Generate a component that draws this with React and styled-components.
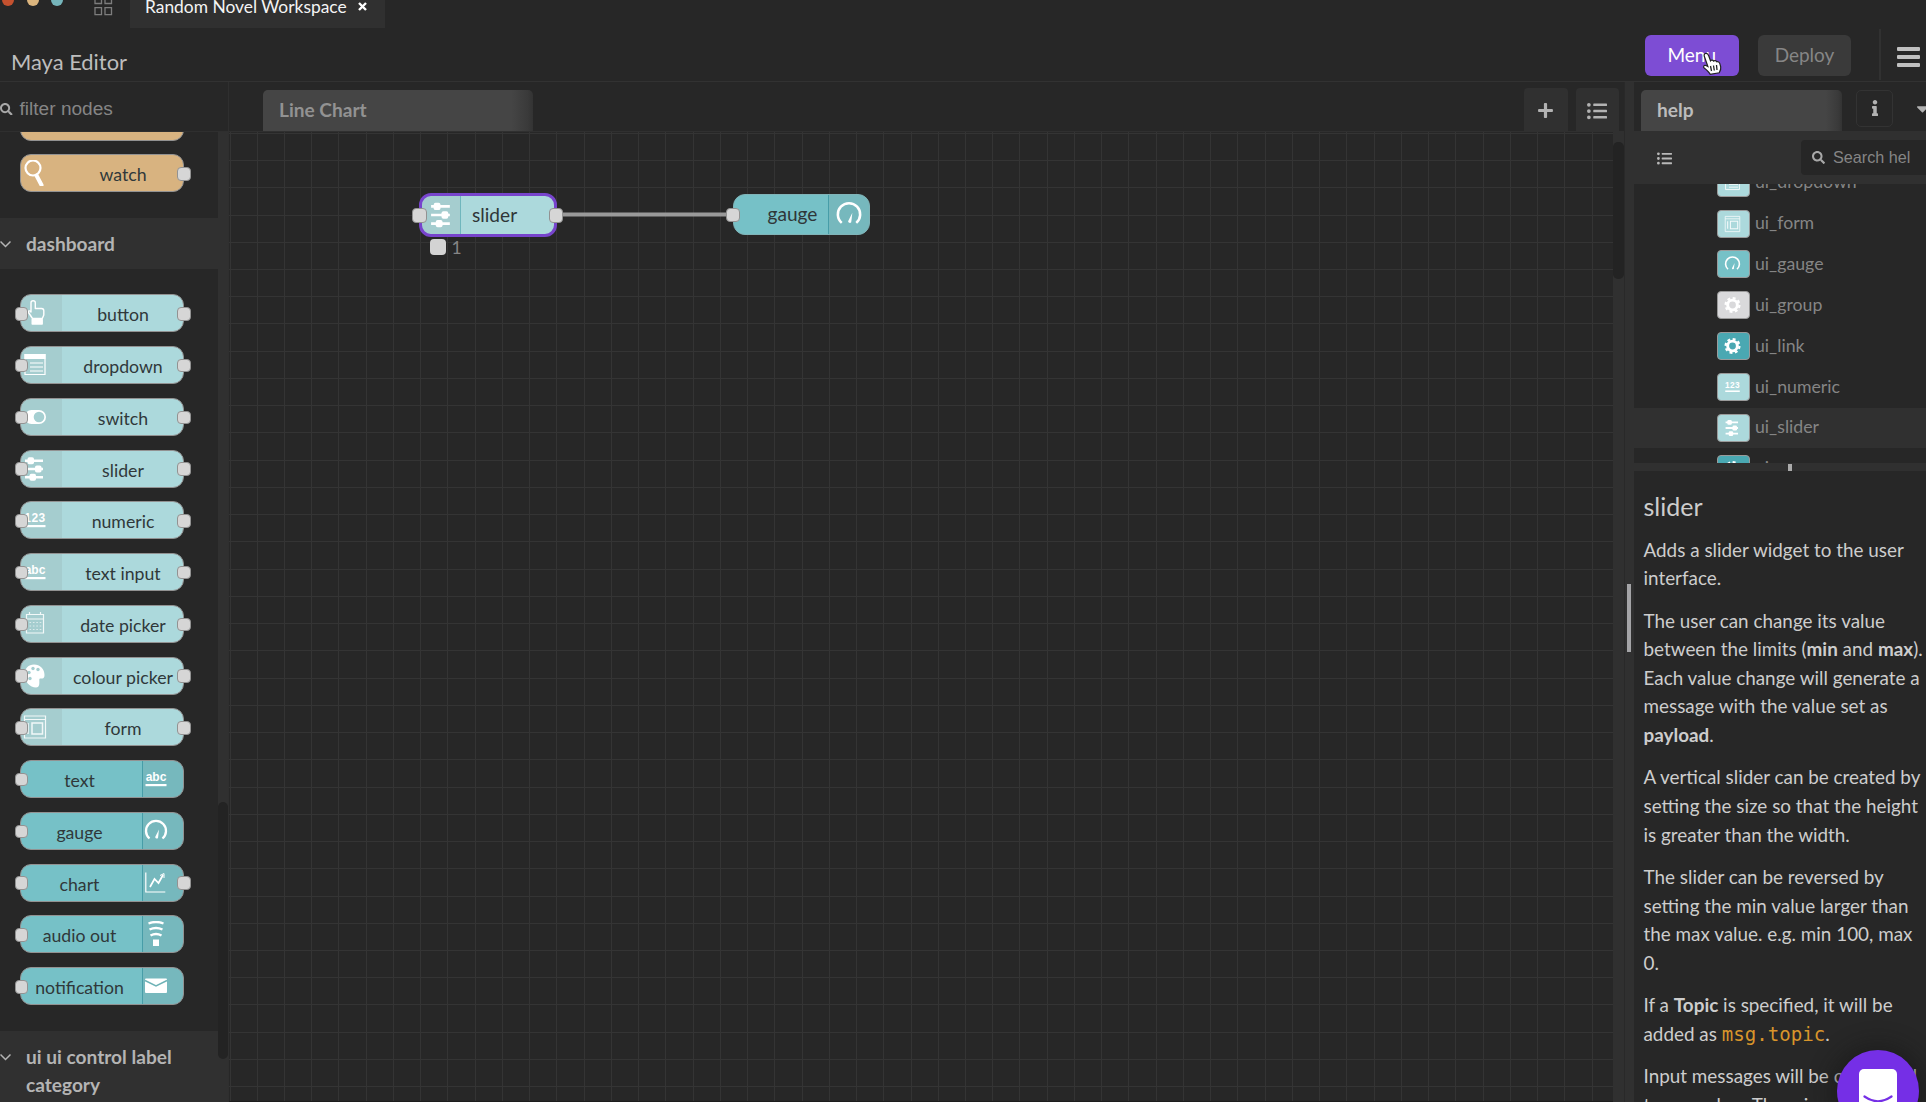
import React from "react";
import styled, { createGlobalStyle, css } from "styled-components";
import { FaSearch, FaListUl, FaPlus, FaInfo, FaCaretDown } from "react-icons/fa";

const Global = createGlobalStyle`
  * { box-sizing: border-box; }
  html, body { margin: 0; padding: 0; background: #272727; overflow: hidden; }
`;

const lato = `Lato, "Noto Sans", sans-serif`;
const arial = `"Liberation Sans", Arial, sans-serif`;

const Page = styled.div`
  width: 1926px;
  height: 1102px;
  overflow: hidden;
  display: flex;
  flex-direction: column;
  background: #272727;
  font-family: ${lato};
  color: #cfcfcf;
  position: relative;
`;

const TitleBar = styled.div`
  height: 28px;
  display: flex;
  align-items: flex-start;
  flex: none;
`;
const Lights = styled.div`
  display: flex;
  gap: 12.5px;
  padding-left: 2px;
  margin-top: -6px;
  width: 94px;
`;
const Light = styled.span`
  width: 12px;
  height: 12px;
  border-radius: 50%;
  background: ${(p) => p.$c};
`;
const WorkspaceTab = styled.div`
  margin-left: 17px;
  width: 255px;
  height: 28px;
  background: #303030;
  display: flex;
  padding-left: 15px;
  gap: 11px;
  color: #f4f4f4;
  font-size: 17.4px;
  line-height: 22px;
  white-space: nowrap;
  & > span { margin-top: -4px; }
  & > svg { margin-top: 2px; }
`;

const Header = styled.header`
  height: 54px;
  flex: none;
  display: flex;
  align-items: flex-start;
  border-bottom: 1px solid #323232;
`;
const AppTitle = styled.h1`
  margin: 20px 0 0 11px;
  font-weight: 400;
  font-size: 21.9px;
  line-height: 28px;
  color: #bdbdbd;
  flex: 1;
`;
const HeaderButton = styled.button`
  border: 0;
  padding: 0 0 3px;
  margin: 7px 19px 0 0;
  width: ${(p) => p.$w}px;
  height: 41px;
  border-radius: 6px;
  font: 400 19px ${lato};
  background: ${(p) => (p.$primary ? "#7d4dd4" : "#3a3a3a")};
  color: ${(p) => (p.$primary ? "#fff" : "#868686")};
`;
const Burger = styled.div`
  margin: 1px 0 0 9px;
  width: 47px;
  height: 51px;
  border-left: 2px solid #313131;
  padding: 18px 0 0 16px;
  display: flex;
  flex-direction: column;
  gap: 4px;
  & > i { width: 23px; height: 4px; border-radius: 1px; background: #c0c0c0; }
`;

const Body = styled.div`
  flex: 1;
  min-height: 0;
  display: flex;
`;

/* palette */
const Palette = styled.aside`
  width: 229px;
  display: flex;
  flex-direction: column;
  border-right: 1px solid #2f2f2f;
`;
const PaletteSearch = styled.div`
  height: 50px;
  flex: none;
  display: flex;
  align-items: center;
  padding-top: 5px;
  gap: 7px;
  font: 19.1px ${arial};
  color: #858585;
  border-bottom: 1px solid #2f2f2f;
  & > svg { color: #a8a8a8; }
`;
const PaletteBody = styled.div`
  flex: 1;
  min-height: 0;
  display: flex;
`;
const PaletteList = styled.div`
  width: 218px;
  overflow: hidden;
`;
const Track = styled.div`
  width: ${(p) => p.$w}px;
  flex: none;
  background: #303030;
  padding-top: ${(p) => p.$top}px;
`;
const Thumb = styled.div`
  height: ${(p) => p.$h}px;
  border-radius: 5px;
  background: #232323;
`;
const Group = styled.div`
  padding: ${(p) => p.$pad};
  margin-top: ${(p) => p.$lift || 0}px;
  display: flex;
  flex-direction: column;
  gap: 13.77px;
`;
const CategoryHeader = styled.div`
  width: 229px;
  height: ${(p) => p.$h}px;
  background: #303030;
  display: flex;
  gap: 15px;
  padding-top: ${(p) => p.$top}px;
  font-weight: 700;
  font-size: 19.1px;
  line-height: 27.3px;
  color: #b4b4b4;
  & > svg { flex: none; margin-top: 10px; }
  & > span { width: 170px; }
`;
const NodeBox = styled.div`
  position: relative;
  flex: none;
  width: 164px;
  height: 38px;
  border: 1.4px solid #929292;
  border-radius: 11px;
  background: ${(p) => p.$bg};
  display: flex;
  flex-direction: ${(p) => (p.$right ? "row-reverse" : "row")};
`;
const NodeIcon = styled.div`
  width: 41px;
  flex: none;
  display: flex;
  align-items: center;
  padding-left: ${(p) => (p.$right ? 1 : 2)}px;
  background: ${(p) => (p.$plain ? "transparent" : "rgba(120,120,120,0.13)")};
  ${(p) =>
    p.$right
      ? css`border-left: 1px solid rgba(40,140,155,0.6); border-radius: 0 10px 10px 0;`
      : css`border-radius: 10px 0 0 10px;`}
`;
const NodeLabel = styled.div`
  flex: 1;
  font-size: 17.7px;
  line-height: 40px;
  color: #30383a;
  white-space: nowrap;
  display: flex;
  justify-content: center;
  ${(p) => (p.$right ? "padding-right: 4px;" : "padding-left: 1px;")}
`;
const Port = styled.i`
  position: absolute;
  ${(p) => (p.$side === "l" ? "left" : "right")}: ${(p) => p.$o || -7.5}px;
  top: 50%;
  margin-top: ${(p) => -(p.$s || 13.6) / 2 + 0.5}px;
  width: ${(p) => p.$s || 13.6}px;
  height: ${(p) => p.$s || 13.6}px;
  border-radius: 4px;
  border: 1.4px solid #929292;
  background: #d6d6d6;
`;

/* workspace */
const Workspace = styled.main`
  width: 1395px;
  display: flex;
  flex-direction: column;
`;
const TabBar = styled.div`
  height: 50px;
  flex: none;
  display: flex;
  align-items: flex-end;
  border-bottom: 1px solid #303030;
  padding: 0 5px 0 34px;
  gap: 8px;
`;
const FlowTab = styled.div`
  width: ${(p) => p.$w}px;
  flex: none;
  height: 41px;
  border-radius: 5px 5px 0 0;
  background: linear-gradient(90deg, #454545 92%, #3a3a3a 98%, #333);
  color: ${(p) => p.$c};
  font-weight: 700;
  font-size: 19.1px;
  line-height: 40px;
  padding-left: 16px;
`;
const Spacer = styled.div`flex: 1;`;
const TabButton = styled.div`
  width: 43.5px;
  height: 43px;
  border-radius: 4px 4px 0 0;
  background: #303030;
  display: flex;
  align-items: center;
  justify-content: center;
  padding-top: 2px;
  color: #b2b2b2;
`;
const CanvasRow = styled.div`
  flex: 1;
  min-height: 0;
  display: flex;
`;
const Canvas = styled.div`
  flex: 1;
  position: relative;
  overflow: hidden;
  border-bottom: 1px solid #1d1d1d;
`;
const Grid = styled.svg`
  display: block;
`;
const CanvasNode = styled(NodeBox)`
  position: absolute;
  left: ${(p) => p.$x}px;
  top: ${(p) => p.$y}px;
  width: ${(p) => p.$w}px;
  height: ${(p) => p.$h}px;
  border: ${(p) => (p.$sel ? "3px solid #7744cc" : "1.4px solid #80b4b8")};
  border-radius: 12px;
`;
const CanvasIcon = styled(NodeIcon)`
  width: ${(p) => (p.$right ? 41 : 39)}px;
  justify-content: center;
  padding: 0;
  ${(p) => !p.$right && css`border-right: 1px solid #6fb6bd;`}
`;
const CanvasLabel = styled.div`
  flex: 1;
  font-size: 19.1px;
  line-height: 38px;
  color: #2f3638;
  padding-left: ${(p) => p.$l}px;
`;
const Status = styled.div`
  position: absolute;
  left: 200.5px;
  top: 106.5px;
  display: flex;
  gap: 5.5px;
  font-size: 17.5px;
  line-height: 17px;
  color: #858585;
  & > i { width: 16.5px; height: 16.5px; border-radius: 4px; background: #d3d3d3; }
`;
const Separator = styled.div`
  width: 10px;
  flex: none;
  background: #303030;
  border-left: 1px solid #292929;
  display: flex;
  align-items: center;
  justify-content: flex-end;
  padding: 51px 3px 0 0;
  & > i { width: 4px; height: 68px; background: #a4a4a7; }
`;

/* sidebar */
const Sidebar = styled.aside`
  width: 292px;
  display: flex;
  flex-direction: column;
  overflow: hidden;
`;
const SideTabs = styled.div`
  height: 49px;
  flex: none;
  display: flex;
  align-items: flex-end;
  padding-left: 7px;
`;
const InfoTab = styled.div`
  margin: 0 0 4px 14px;
  width: 37px;
  height: 37px;
  flex: none;
  border: 1px solid #333;
  border-radius: 5px;
  display: flex;
  align-items: center;
  justify-content: center;
  color: #b2b2b2;
  padding-bottom: 1px;
`;
const Caret = styled.div`
  margin: 0 0 10px 20px;
  color: #b2b2b2;
  height: 22px;
  flex: none;
`;
const SideToolbar = styled.div`
  height: 53px;
  flex: none;
  background: #303030;
  display: flex;
  align-items: center;
  padding-left: 22.5px;
  color: #b8b8b8;
  & > svg { flex: none; margin-top: 1px; }
`;
const SearchBox = styled.div`
  margin: 0 0 1px 129.5px;
  width: 130px;
  height: 35px;
  border-radius: 4px 0 0 4px;
  background: #262626;
  display: flex;
  align-items: center;
  padding-left: 11px;
  gap: 8px;
  font: 16.2px ${arial};
  color: #858585;
  white-space: nowrap;
  flex: none;
  & > svg { color: #a8a8a8; }
`;
const Tree = styled.div`
  height: 279px;
  flex: none;
  overflow: hidden;
`;
const TreeInner = styled.div`
  margin-top: -21.8px;
`;
const TreeRow = styled.div`
  height: 40.9px;
  display: flex;
  align-items: center;
  gap: 5px;
  padding-left: 83px;
  font-size: 17.7px;
  line-height: 38px;
  color: #858585;
  background: ${(p) => (p.$sel ? "#303030" : "transparent")};
  & > span:last-child { margin-top: -1px; }
`;
const Chip = styled.span`
  width: 33px;
  height: 28px;
  border-radius: 4px;
  border: 1.4px solid #9a9a9a;
  background: ${(p) => p.$bg};
  display: flex;
  align-items: center;
  justify-content: center;
  padding-right: 2px;
`;
const HSplit = styled.div`
  height: 8px;
  flex: none;
  background: #303030;
  padding: 1px 0 0 154px;
  & > i { display: block; width: 4px; height: 7px; background: #ababab; }
`;
const Help = styled.article`
  padding: 21px 0 0 9.5px;
  width: 292px;
  font-size: 18.86px;
  line-height: 28.6px;
  color: #cdcdcd;
  h2 { font-weight: 400; font-size: 25px; line-height: 28px; margin: 0 0 15.6px; }
  p { margin: 0 0 13.8px; white-space: nowrap; }
  b { font-weight: 700; }
  code { font: 19.1px "DejaVu Sans Mono", monospace; line-height: 20px; color: #d8952b; }
`;
const Launcher = styled.div`
  position: absolute;
  left: 1837px;
  top: 1050px;
  width: 82px;
  height: 82px;
  border-radius: 50%;
  background: #752fe6;
  box-shadow: 0 2px 22px 8px rgba(20,20,20,0.45);
  display: flex;
  justify-content: center;
  padding-top: 19px;
`;
const Cursor = styled.svg`
  position: absolute;
  left: 1701px;
  top: 52px;
`;

const glyphs = {
  watch: (
    <g fill="none" stroke="#fff" strokeWidth="2.2" strokeLinecap="round">
      <circle cx="10" cy="8" r="7.5" />
      <path d="M13.5 15.5l5 9.5" strokeWidth="4" />
    </g>
  ),
  button: (
    <g fill="none" stroke="#fff" strokeWidth="1.4" strokeLinejoin="round">
      <path d="M9.500 18.500l-4-6c-1-1.500 1-2.500 2.500-.5V2.700c0-2.600 4.300-2.600 4.300 0V8.500h6.200c1.600 0 2.300.8 2.300 2.200v4.300l-1.500 3.500z" />
      <path d="M9.200 19.500h10v4.500h-10z" fill="#fff" />
    </g>
  ),
  dropdown: (
    <g stroke="#fff" fill="none" strokeWidth="1.2">
      <path d="M2 2.500h20v20H2z" />
      <path d="M1.500 4.500h21" strokeWidth="5" />
      <path d="M7 11h13M7 15h13M7 19h13" strokeWidth="1.200" />
    </g>
  ),
  switch: (
    <g>
      <rect x="1.500" y="6" width="21.500" height="14" rx="7" fill="#fff" />
      <circle cx="16" cy="13" r="5.300" fill="#a5cfd1" />
    </g>
  ),
  slider: (
    <g fill="#fff">
      <path d="M2 3.500h18v2.600H2zM2 11.700h18v2.600H2zM2 19.900h18v2.600H2z" />
      <rect x="4.500" y="1.300" width="6.500" height="7" rx="1.800" />
      <rect x="12" y="9.500" width="6.500" height="7" rx="1.800" />
      <rect x="6.500" y="17.700" width="6.500" height="7" rx="1.800" />
    </g>
  ),
  numeric: (
    <g fill="#fff">
      <text x="12" y="15" textAnchor="middle" fontFamily="Liberation Sans" fontWeight="700" fontSize="12" letterSpacing="0.500">123</text>
      <rect x="1.500" y="18" width="21" height="2.200" />
    </g>
  ),
  abc: (
    <g fill="#fff">
      <text x="12" y="15" textAnchor="middle" fontFamily="Liberation Sans" fontWeight="700" fontSize="12">abc</text>
      <rect x="1.500" y="18" width="21" height="2.200" />
    </g>
  ),
  date: (
    <g fill="none" stroke="#fff" strokeWidth="1.200" strokeOpacity="0.85">
      <path d="M3.500 3.500h17v18.500h-17zM3.500 8h17M6.500 1v3M17.500 1v3" />
      <path d="M6.500 11.500h12M6.500 15h12M6.500 18.500h12" strokeDasharray="1.600 1.800" strokeOpacity="0.6" />
    </g>
  ),
  colour: (
    <g>
      <path fill="#fff" d="M11 1.500c6 0 10.500 4.500 10.500 10.500 0 2-.8 3.500-2.200 3.500-1.800 0-3-.6-3 1.200 0 2.800.8 7.800-3.300 7.800C7 24.500 1.500 18.500 1.500 12S5.500 1.500 11 1.500z" />
      <g fill="#a5cfd1"><circle cx="6" cy="9.500" r="1.700" /><circle cx="10" cy="5.500" r="1.700" /><circle cx="15" cy="6.500" r="1.700" /><circle cx="7" cy="15.500" r="1.700" /></g>
    </g>
  ),
  form: (
    <g fill="none" stroke="#fff" strokeWidth="1.200" strokeOpacity="0.85">
      <path d="M1.500 2h21v22h-21zM1.500 5.500h21" />
      <path d="M9 9h10.500v11H9zM5 9v11" strokeWidth="1.500" />
    </g>
  ),
  gauge: (
    <g>
      <path d="M5.500 20.500a10 10 0 1 1 13 0" fill="none" stroke="#fff" strokeWidth="2.300" />
      <path d="M15 11.500l-1 8.500a1.600 1.600 0 0 1-2.800-1z" fill="#fff" />
    </g>
  ),
  chart: (
    <g fill="none" stroke="#fff">
      <path d="M1.800 2.500v19.500h19.500" strokeWidth="1.200" />
      <path d="M6 17l4.500-8 4 4 4.500-8" strokeWidth="1.700" />
      <path d="M16 5.500l4-2v4.500" strokeWidth="1" />
    </g>
  ),
  audio: (
    <g fill="none" stroke="#fff" strokeWidth="2.400">
      <path d="M4.500 2.500q7.500-3 15 0M5.500 8.500q6.500-3 13 0M6.500 14.500q5.500-3 11 0" />
      <path d="M9 18.500h6v6.500H9z" fill="#fff" stroke="none" />
    </g>
  ),
  mail: (
    <g>
      <rect x="1" y="5.500" width="22" height="14.500" rx="1" fill="#fff" />
      <path d="M1 7.500l11 5.500L23 7.500" fill="none" stroke="#6fb3b7" strokeWidth="1.500" />
    </g>
  ),
  gear: (
    <g fill="none" stroke="#fff">
      <circle cx="12" cy="13" r="7" strokeWidth="4.200" />
      <circle cx="12" cy="13" r="10" strokeWidth="3.200" strokeDasharray="4.200 3.650" />
    </g>
  ),
};

const Glyph = ({ name, w = 24, h = 26 }) => (
  <svg width={w} height={h} viewBox="0 0 24 26">{glyphs[name]}</svg>
);

const Chevron = () => (
  <svg width="11" height="8" viewBox="0 0 11 8">
    <path d="M0.500 1.500l5 5 5-5" fill="none" stroke="#b4b4b4" strokeWidth="1.500" />
  </svg>
);

const PITCH = 27.24;
const gridPath = [
  ...Array.from({ length: 51 }, (_, i) => `M${Math.round(0.5 + i * PITCH) + 0.5} 0V970`),
  ...Array.from({ length: 36 }, (_, i) => `M0 ${Math.round(0.8 + i * PITCH) + 0.5}H1384`),
].join("");

const LIGHT = "#acd9dc";
const TEAL = "#76c1c7";

const inputs = [
  ["button", "button"],
  ["dropdown", "dropdown"],
  ["switch", "switch"],
  ["slider", "slider"],
  ["numeric", "numeric"],
  ["text input", "abc"],
  ["date picker", "date"],
  ["colour picker", "colour"],
  ["form", "form"],
];
const outputs = [
  ["text", "abc", false],
  ["gauge", "gauge", false],
  ["chart", "chart", true],
  ["audio out", "audio", false],
  ["notification", "mail", false],
];
const treeItems = [
  ["ui_dropdown", "dropdown", LIGHT],
  ["ui_form", "form", LIGHT],
  ["ui_gauge", "gauge", TEAL],
  ["ui_group", "gear", "#d9d9db"],
  ["ui_link", "gear", "#4aa8b2"],
  ["ui_numeric", "numeric", LIGHT],
  ["ui_slider", "slider", LIGHT],
  ["ui_spacer", "gear", "#4aa8b2"],
];

const PaletteNode = ({ label, icon, bg, right, inPort = true, outPort = true, plain }) => (
  <NodeBox $bg={bg} $right={right}>
    <NodeIcon $right={right} $plain={plain}>{icon && <Glyph name={icon} />}</NodeIcon>
    <NodeLabel $right={right}>{label}</NodeLabel>
    {inPort && <Port $side="l" $o={-6.5} />}
    {outPort && <Port $side="r" />}
  </NodeBox>
);

export default function App() {
  return (
    <Page>
      <Global />
      <TitleBar>
        <Lights>
          <Light $c="#c4512f" />
          <Light $c="#dcb57e" />
          <Light $c="#76b5bb" />
        </Lights>
        <svg width="19" height="16" viewBox="0 0 19 16">
          <g fill="none" stroke="#7d7d7d" strokeWidth="1.300">
            <path d="M1-3h6.500v6.500H1zM11-3h6.500v6.500H11zM1 7.700h6.500v7H1zM11 7.700h6.500v7H11z" />
          </g>
        </svg>
        <WorkspaceTab>
          <span>Random Novel Workspace</span>
          <svg width="9" height="9" viewBox="0 0 9 9">
            <path d="M1 1l7 7M8 1l-7 7" stroke="#fff" strokeWidth="2.400" />
          </svg>
        </WorkspaceTab>
      </TitleBar>
      <Header>
        <AppTitle>Maya Editor</AppTitle>
        <HeaderButton $primary $w={94.5}>Menu</HeaderButton>
        <HeaderButton $w={93}>Deploy</HeaderButton>
        <Burger><i /><i /><i /></Burger>
      </Header>
      <Body>
        <Palette>
          <PaletteSearch><FaSearch size={12.5} />filter nodes</PaletteSearch>
          <PaletteBody>
            <PaletteList>
              <Group $pad="0 0 26px 20px" $lift={-29.5}>
                <PaletteNode bg="#d8b380" plain inPort={false} outPort={false} />
                <PaletteNode label="watch" icon="watch" bg="#d8b380" plain inPort={false} />
              </Group>
              <CategoryHeader $h={51} $top={11.5}><Chevron /><span>dashboard</span></CategoryHeader>
              <Group $pad="25px 0 25.500px 20px">
                {inputs.map(([l, i]) => <PaletteNode key={l} label={l} icon={i} bg={LIGHT} />)}
                {outputs.map(([l, i, o]) => <PaletteNode key={l} label={l} icon={i} bg={TEAL} right outPort={o} />)}
              </Group>
              <CategoryHeader $h={75} $top={12.5}><Chevron /><span>ui ui control label category</span></CategoryHeader>
            </PaletteList>
            <Track $w={10} $top={670}><Thumb $h={257} /></Track>
          </PaletteBody>
        </Palette>
        <Workspace>
          <TabBar>
            <FlowTab $w={270} $c="#929292">Line Chart</FlowTab>
            <Spacer />
            <TabButton><FaPlus size={17} /></TabButton>
            <TabButton><FaListUl size={20} /></TabButton>
          </TabBar>
          <CanvasRow>
            <Canvas>
              <Grid width="1384" height="970">
                <path d={gridPath} stroke="#343434" fill="none" />
                <path d="M334 82.500H498" stroke="#999" strokeWidth="4" />
              </Grid>
              <CanvasNode $bg={LIGHT} $sel $x={190} $y={61} $w={138} $h={44}>
                <CanvasIcon><Glyph name="slider" w={25} h={28} /></CanvasIcon>
                <CanvasLabel $l={11}>slider</CanvasLabel>
                <Port $side="l" $s={14.5} $o={-10} />
                <Port $side="r" $s={14.5} $o={-9} />
              </CanvasNode>
              <Status><i /><span>1</span></Status>
              <CanvasNode $bg={TEAL} $right $x={504} $y={62} $w={137} $h={41}>
                <CanvasIcon $right><Glyph name="gauge" w={28} h={29} /></CanvasIcon>
                <CanvasLabel $l={33.5}>gauge</CanvasLabel>
                <Port $side="l" $s={14.5} $o={-8.5} />
              </CanvasNode>
            </Canvas>
            <Track $w={11} $top={10}><Thumb $h={137} /></Track>
          </CanvasRow>
        </Workspace>
        <Separator><i /></Separator>
        <Sidebar>
          <SideTabs>
            <FlowTab $w={201} $c="#bcbcbc">help</FlowTab>
            <InfoTab><FaInfo size={16} /></InfoTab>
            <Caret><FaCaretDown size={19} /></Caret>
          </SideTabs>
          <SideToolbar>
            <FaListUl size={15} />
            <SearchBox><FaSearch size={13} />Search hel</SearchBox>
          </SideToolbar>
          <Tree>
            <TreeInner>
              {treeItems.map(([l, i, c]) => (
                <TreeRow key={l} $sel={l === "ui_slider"}>
                  <Chip $bg={c}><Glyph name={i} w={17} h={18} /></Chip>
                  <span>{l}</span>
                </TreeRow>
              ))}
            </TreeInner>
          </Tree>
          <HSplit><i /></HSplit>
          <Help>
            <h2>slider</h2>
            <p>Adds a slider widget to the user<br />interface.</p>
            <p>The user can change its value<br />between the limits (<b>min</b> and <b>max</b>).<br />Each value change will generate a<br />message with the value set as<br /><b>payload</b>.</p>
            <p>A vertical slider can be created by<br />setting the size so that the height<br />is greater than the width.</p>
            <p>The slider can be reversed by<br />setting the min value larger than<br />the max value. e.g. min 100, max<br />0.</p>
            <p>If a <b>Topic</b> is specified, it will be<br />added as <code>msg.topic</code>.</p>
            <p>Input messages will be converted<br />to a number. The min</p>
          </Help>
        </Sidebar>
      </Body>
      <Launcher>
        <svg width="38" height="46" viewBox="0 0 38 46">
          <rect width="38" height="44" rx="5" fill="#fff" />
          <path d="M5.500 27.500q13.500 9.500 27 0" fill="none" stroke="#752fe6" strokeWidth="2.200" strokeLinecap="round" />
        </svg>
      </Launcher>
      <Cursor width="22" height="24" viewBox="0 0 22 24">
        <path d="M4.500 1.500c1.800-.6 2.600.6 3.200 2.300l1.800 5c.6-1 2.500-1 3.200.3.800-.8 2.500-.5 3 .7 1.200-.6 2.800.2 3.200 2l.8 3c.5 2.500-.7 4.500-1.500 6l-9 1.500c-1-2.300-3.500-4.300-6-6.300-1.500-1.300-.2-3.200 1.700-2.500l2 1L3.300 4.200c-.4-1.200 0-2.300 1.200-2.700z" fill="#fff" stroke="#222" strokeWidth="1.200" />
        <path d="M9.500 14l1 5M12.500 13.500l.8 5M15.500 13l.5 5" stroke="#222" strokeWidth="1.300" />
      </Cursor>
    </Page>
  );
}
